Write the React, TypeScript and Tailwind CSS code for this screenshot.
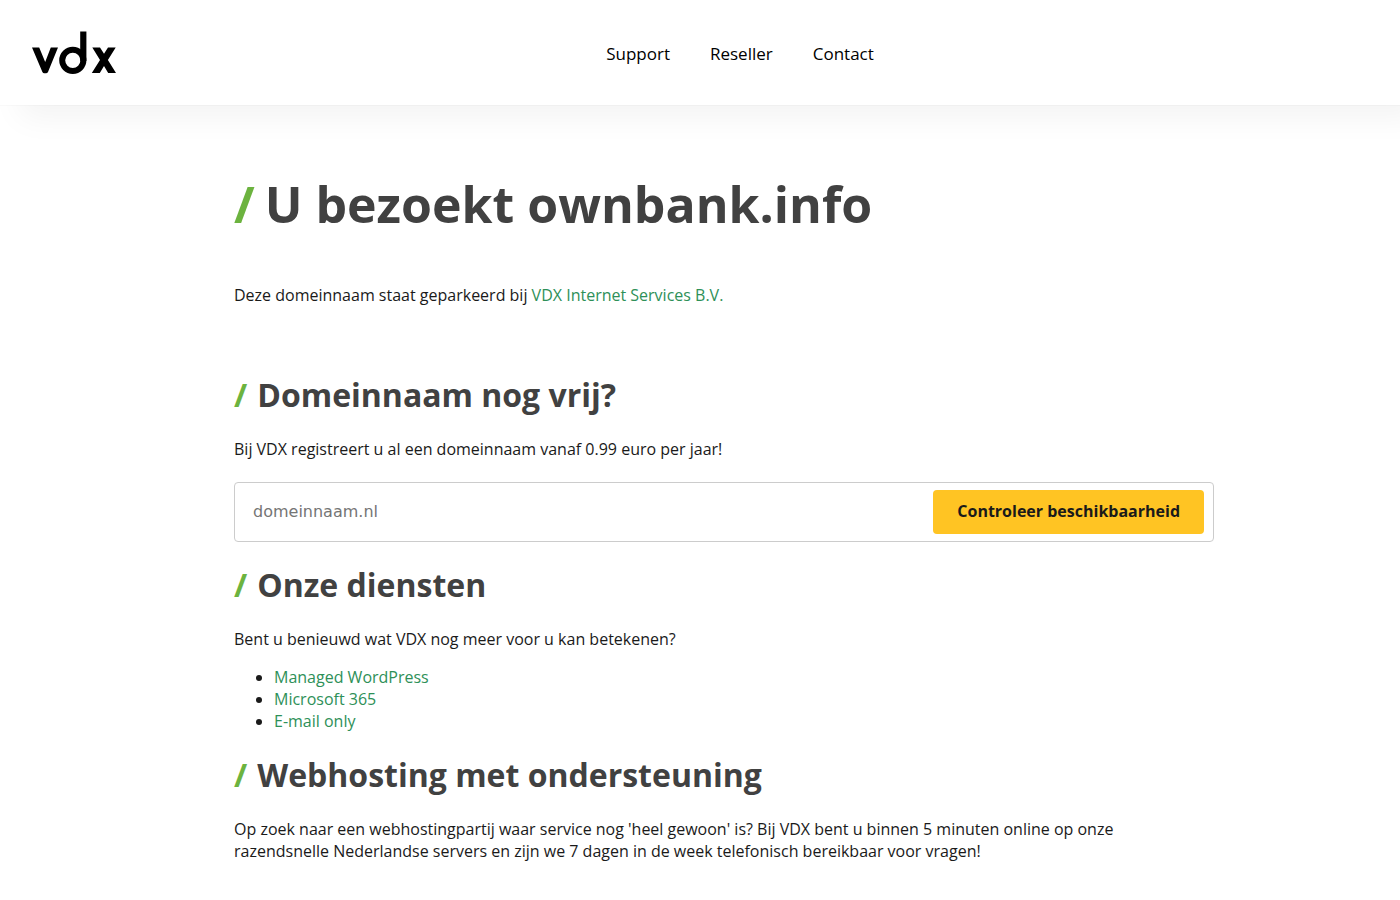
import type { ReactNode } from 'react'

const navLinks = ['Support', 'Reseller', 'Contact']
const services = ['Managed WordPress', 'Microsoft 365', 'E-mail only']

const Logo = () => (
  <svg width="84" height="43" viewBox="0 0 84 43" fill="#000" aria-label="vdx" role="img">
    <path d="M0 16.500 H7.200 L13.200 31 L18.800 16.500 H26 L16 41 Q15.300 42.300 14 42.300 H12.200 Q11 42.300 10.400 41 Z" />
    <circle cx="40.800" cy="29.300" r="10.600" fill="none" stroke="#000" strokeWidth="6" />
    <path d="M48.200 0.500 H54.400 V30 H48.200 Z" />
    <path d="M60.300 16.500 H68 L72 22.800 L76 16.500 H83.700 L75.900 29 L84 42 H76.200 L72 35 L67.800 42 H59.800 L68 29 Z" />
  </svg>
)

const Heading = ({ children }: { children: ReactNode }) => (
  <h2 className="text-[32px] leading-[44px] font-bold text-[#414141]">
    <span className="mr-[10px] text-[#6cb33f]">/</span>
    {children}
  </h2>
)

const TextLink = ({ children }: { children: ReactNode }) => (
  <a href="#" className="text-[#2e9058]">
    {children}
  </a>
)

export default function App() {
  return (
    <div className="font-['Open_Sans',sans-serif] text-base leading-[22px] text-[#1a1a1a]">
      <header className="grid grid-cols-[1fr_auto_1fr] items-center px-8 h-[105px] bg-white shadow-[0_1px_1px_rgba(0,0,0,0.02),20px_12px_30px_rgba(0,0,0,0.05)]">
        <a href="#" className="justify-self-start">
          <Logo />
        </a>
        <nav className="flex gap-10 ml-20 pt-0.5 text-[17px] text-black">
          {navLinks.map((label) => (
            <a key={label} href="#">
              {label}
            </a>
          ))}
        </nav>
      </header>

      <main className="mx-auto box-content max-w-[980px] pt-[65px] pl-12">
        <h1 className="text-[50px] leading-[68px] font-bold text-[#414141]">
          <span className="mr-[10px] text-[#6cb33f]">/</span>
          U bezoekt ownbank.info
        </h1>
        <p className="mt-[46px]">
          Deze domeinnaam staat geparkeerd bij <TextLink>VDX Internet Services B.V.</TextLink>
        </p>

        <section className="mt-[67px]">
          <Heading>Domeinnaam nog vrij?</Heading>
          <p className="mt-[21px]">Bij VDX registreert u al een domeinnaam vanaf 0.99 euro per jaar!</p>
          <form className="mt-[22px] flex h-[60px] items-center rounded border border-[#ccc] pr-[9px]">
            <input
              type="text"
              aria-label="Domeinnaam"
              placeholder="domeinnaam.nl"
              className="min-w-0 flex-1 self-stretch px-[18px] font-['DejaVu_Sans',sans-serif] outline-none placeholder:text-[#757575]"
            />
            <button type="button" className="h-11 rounded bg-[#ffc423] px-6 pb-0.5 font-bold">
              Controleer beschikbaarheid
            </button>
          </form>
        </section>

        <section className="mt-[21px]">
          <Heading>Onze diensten</Heading>
          <p className="mt-[21px]">Bent u benieuwd wat VDX nog meer voor u kan betekenen?</p>
          <ul className="mt-4 list-disc pl-10">
            {services.map((service) => (
              <li key={service}>
                <TextLink>{service}</TextLink>
              </li>
            ))}
          </ul>
        </section>

        <section className="mt-[21px]">
          <Heading>Webhosting met ondersteuning</Heading>
          <p className="mt-[21px] max-w-[900px]">
            Op zoek naar een webhostingpartij waar service nog 'heel gewoon' is? Bij VDX bent u binnen 5 minuten online
            op onze razendsnelle Nederlandse servers en zijn we 7 dagen in de week telefonisch bereikbaar voor vragen!
          </p>
        </section>
      </main>
    </div>
  )
}
